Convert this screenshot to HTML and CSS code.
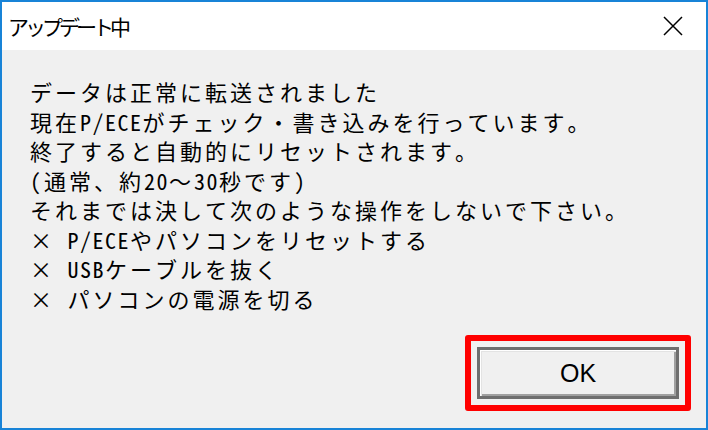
FILE: index.html
```html
<!DOCTYPE html>
<html lang="ja">
<head>
    <meta charset="UTF-8">
    <meta name="viewport" content="width=device-width, initial-scale=1.0">
    <title>アップデート中</title>
    <link rel="stylesheet" href="styles.css">
</head>
<body>
    <div class="window">
        <div class="titlebar">
            <span class="title">アップデート中</span>
            <svg class="close" width="20" height="20" viewBox="0 0 20 20">
                <path d="M1 1 L19 19 M19 1 L1 19" stroke="#000" stroke-width="1.5" fill="none"/>
            </svg>
        </div>
        <div class="message">
            <p>データは正常に転送されました</p>
            <p>現在<span class="hw">P/ECE</span>がチェック・書き込みを行っています。</p>
            <p>終了すると自動的にリセットされます。</p>
            <p>(通常、約<span class="hw">20</span>～<span class="hw">30</span>秒です)</p>
            <p>それまでは決して次のような操作をしないで下さい。</p>
            <p>×<span class="hw"> P/ECE</span>やパソコンをリセットする</p>
            <p>×<span class="hw"> USB</span>ケーブルを抜く</p>
            <p>×<span class="hw"> </span>パソコンの電源を切る</p>
        </div>
        <div class="footer">
            <div class="highlight">
                <button class="ok-button">OK</button>
            </div>
        </div>
    </div>
</body>
</html>
```
FILE: styles.css
```css
/* Page */
body {
    margin: 0;
    padding: 0;
    background-color: #f0f0f0;
}

/* Dialog window */
.window {
    width: 708px;
    height: 430px;
    box-sizing: border-box;
    border: 2px solid #1883d7;
    background-color: #f0f0f0;
    display: flex;
    flex-direction: column;
}

/* Title bar */
.titlebar {
    height: 48px;
    flex-shrink: 0;
    background-color: #fff;
    display: flex;
    align-items: center;
    justify-content: space-between;
    padding: 0 23px 0 6px;
}

.title {
    font-family: "Noto Sans CJK JP", sans-serif;
    font-size: 21px;
    letter-spacing: -4px;
    color: #000;
}

.close {
    display: block;
}

/* Message text */
.message {
    padding: 27px 0 0 28px;
    font-family: "Noto Sans Mono CJK JP", "Noto Sans CJK JP", monospace;
    font-size: 22px;
    line-height: 29.5px;
    letter-spacing: 3px;
    color: #000;
}

.message p {
    margin: 0;
    white-space: pre;
}

.hw {
    letter-spacing: 1.5px;
}

/* Button row */
.footer {
    margin-top: auto;
    display: flex;
    justify-content: flex-end;
    padding: 0 15px 17px 0;
}

.highlight {
    border: 6px solid #ff0000;
    border-radius: 3px;
    padding: 6px;
}

.ok-button {
    display: block;
    width: 202px;
    height: 52px;
    box-sizing: border-box;
    border: 3px solid #6e6e6e;
    background-color: #f0f0f0;
    box-shadow: inset 1px 1px 0 #fff, inset 2px 2px 0 #e3e3e3, inset -2px -2px 0 #a0a0a0;
    font-family: "Liberation Sans", Arial, sans-serif;
    font-size: 25px;
    color: #000;
    padding: 0;
}
```
